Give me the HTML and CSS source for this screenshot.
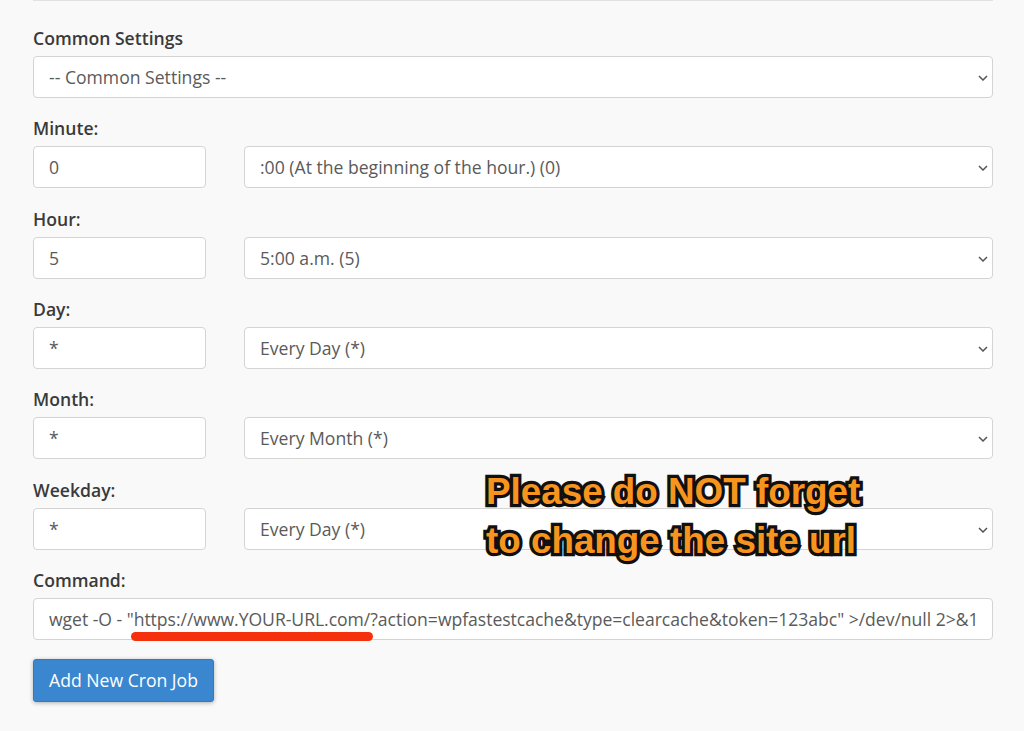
FILE: index.html
```html
<!DOCTYPE html>
<html lang="en">
<head>
<meta charset="utf-8">
<title>Add New Cron Job</title>
<link rel="stylesheet" href="styles.css">
</head>
<body>
<main class="page">
  <div class="top-rule"></div>
  <form class="cron-form">
    <div class="field">
      <label class="label">Common Settings</label>
      <div class="select-wrap">
        <select class="control"><option>-- Common Settings --</option></select>
        <svg class="chevron" viewBox="0 0 10 6"><path d="M1 1l4 4 4-4"/></svg>
      </div>
    </div>
    <div class="field">
      <label class="label">Minute:</label>
      <div class="pair">
        <input class="control" value="0">
        <div class="select-wrap">
          <select class="control"><option>:00 (At the beginning of the hour.) (0)</option></select>
          <svg class="chevron" viewBox="0 0 10 6"><path d="M1 1l4 4 4-4"/></svg>
        </div>
      </div>
    </div>
    <div class="field">
      <label class="label">Hour:</label>
      <div class="pair">
        <input class="control" value="5">
        <div class="select-wrap">
          <select class="control"><option>5:00 a.m. (5)</option></select>
          <svg class="chevron" viewBox="0 0 10 6"><path d="M1 1l4 4 4-4"/></svg>
        </div>
      </div>
    </div>
    <div class="field">
      <label class="label">Day:</label>
      <div class="pair">
        <input class="control" value="*">
        <div class="select-wrap">
          <select class="control"><option>Every Day (*)</option></select>
          <svg class="chevron" viewBox="0 0 10 6"><path d="M1 1l4 4 4-4"/></svg>
        </div>
      </div>
    </div>
    <div class="field">
      <label class="label">Month:</label>
      <div class="pair">
        <input class="control" value="*">
        <div class="select-wrap">
          <select class="control"><option>Every Month (*)</option></select>
          <svg class="chevron" viewBox="0 0 10 6"><path d="M1 1l4 4 4-4"/></svg>
        </div>
      </div>
    </div>
    <div class="field">
      <label class="label">Weekday:</label>
      <div class="pair">
        <input class="control" value="*">
        <div class="select-wrap">
          <select class="control"><option>Every Day (*)</option></select>
          <svg class="chevron" viewBox="0 0 10 6"><path d="M1 1l4 4 4-4"/></svg>
        </div>
      </div>
    </div>
    <div class="field field-last">
      <label class="label">Command:</label>
      <input class="control command" value="wget -O - &quot;https://www.YOUR-URL.com/?action=wpfastestcache&amp;type=clearcache&amp;token=123abc&quot; &gt;/dev/null 2&gt;&amp;1">
    </div>
    <button class="submit" type="button">Add New Cron Job</button>
  </form>
  <div class="callout">Please do NOT forget<br>to change the site url</div>
  <div class="underline"></div>
</main>
</body>
</html>
```

FILE: styles.css
```css
* { box-sizing: border-box; }
html, body { margin: 0; height: 100%; }
body {
  background: #f9f9f9;
  font-family: "Open Sans", sans-serif;
  color: #333;
  overflow: hidden;
}
.page {
  position: relative;
  height: 731px;
  padding: 0 31px 0 33px;
}
.top-rule {
  height: 1px;
  background: #e2e2e2;
}
.cron-form {
  padding-top: 27px;
}
.field {
  margin-bottom: 20.33px;
}
.field-last {
  margin-bottom: 19px;
}
.label {
  display: block;
  height: 28px;
  font-size: 17.6px;
  line-height: 20px;
  font-weight: 600;
  color: #3a3a3a;
}
.control {
  display: block;
  width: 100%;
  height: 42px;
  padding: 0 15px;
  border: 1.5px solid #d4d4d4;
  border-radius: 4px;
  background: #fff;
  font-family: inherit;
  font-size: 17.6px;
  color: #5a5a5a;
  outline: none;
  appearance: none;
}
.command {
  padding-right: 8px;
  letter-spacing: -.04px;
}
.pair {
  display: grid;
  grid-template-columns: 173px 1fr;
  gap: 38px;
}
.select-wrap {
  position: relative;
}
.chevron {
  position: absolute;
  right: 5px;
  top: 19px;
  width: 10px;
  height: 6px;
  fill: none;
  stroke: #555;
  stroke-width: 1.5;
}
.submit {
  display: block;
  width: 181px;
  height: 43px;
  padding: 0;
  border: 1px solid #2d7cc4;
  border-radius: 3px;
  background: #3a87d0;
  box-shadow: 0 1px 4px rgba(0, 0, 0, .3);
  font-family: inherit;
  font-size: 17.6px;
  color: #fff;
}
.callout {
  position: absolute;
  left: 486px;
  top: 467px;
  font-family: "Liberation Sans", Arial, sans-serif;
  font-size: 36.8px;
  line-height: 49px;
  font-weight: 700;
  white-space: nowrap;
  color: #f7941e;
  -webkit-text-stroke: 6.5px #111;
  paint-order: stroke fill;
  text-shadow: 0 1px 2px rgba(0, 0, 0, .45);
}
.underline {
  position: absolute;
  left: 131px;
  top: 632px;
  width: 242px;
  height: 9px;
  border-radius: 4.5px;
  background: #f5300c;
}
```
